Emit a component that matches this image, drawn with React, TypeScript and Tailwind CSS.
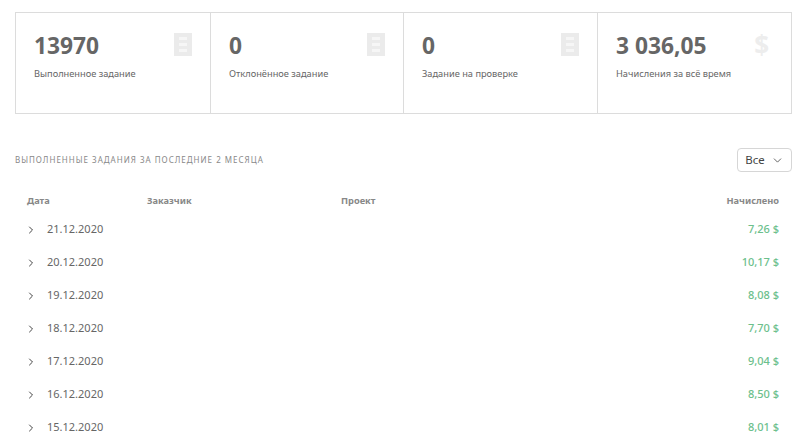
import { ChevronDown, ChevronRight } from "lucide-react";

const stats = [
  { value: "13970", label: "Выполненное задание", icon: "doc", cell: "w-[195px]" },
  { value: "0", label: "Отклонённое задание", icon: "doc", cell: "w-[193px]" },
  { value: "0", label: "Задание на проверке", icon: "doc", cell: "w-[194px]" },
  { value: "3 036,05", label: "Начисления за всё время", icon: "dollar", cell: "flex-1" },
];

const rows = [
  { date: "21.12.2020", sum: "7,26 $" },
  { date: "20.12.2020", sum: "10,17 $" },
  { date: "19.12.2020", sum: "8,08 $" },
  { date: "18.12.2020", sum: "7,70 $" },
  { date: "17.12.2020", sum: "9,04 $" },
  { date: "16.12.2020", sum: "8,50 $" },
  { date: "15.12.2020", sum: "8,01 $" },
];

function DocIcon() {
  return (
    <svg width="18" height="23" viewBox="0 0 18 23" className="block">
      <rect width="18" height="23" fill="#ebebeb" />
      <rect x="5" y="4" width="8" height="3" fill="#f6f6f6" />
      <rect x="5" y="10" width="8" height="3" fill="#f6f6f6" />
      <rect x="5" y="16" width="8" height="3" fill="#f6f6f6" />
    </svg>
  );
}

export default function App() {
  return (
    <div className="h-[436px] overflow-hidden bg-white px-[15px] pt-3 font-['Noto_Sans','Open_Sans',sans-serif] text-[#666]">
      <div className="flex h-[102px] w-[777px] border border-[#dcdcdc]">
        {stats.map((s, i) => (
          <div
            key={i}
            className={`${s.cell} flex justify-between border-[#dcdcdc] pl-[18px] pr-[18px] pt-5 ${i < 3 ? "border-r" : ""}`}
          >
            <div>
              <div className="-mt-px text-[22.75px] leading-[28px] font-bold text-[#666]">{s.value}</div>
              <div className="mt-[7px] text-[9.25px] leading-[14px] text-[#666]">{s.label}</div>
            </div>
            {s.icon === "doc" ? (
              <DocIcon />
            ) : (
              <div className="pr-[4px] text-[26px] leading-[24px] font-bold text-[#ededed]">$</div>
            )}
          </div>
        ))}
      </div>

      <div className="mt-[34px] flex h-6 w-[777px] items-center justify-between">
        <div className="text-[8px] tracking-[0.125em] text-[#888] uppercase">
          Выполненные задания за последние 2 месяца
        </div>
        <div className="flex h-6 w-[55px] items-center justify-center gap-[6px] rounded-sm border border-[#d6d6d6] text-[11.5px] text-[#444]">
          Все
          <ChevronDown size={13} strokeWidth={1.5} className="text-[#444]" />
        </div>
      </div>

      <div className="mt-[17px] w-[777px] pl-3 pr-[13px]">
        <div className="flex h-[24px] items-center text-[9.25px] font-bold text-[#888]">
          <div className="w-[120px]">Дата</div>
          <div className="w-[194px]">Заказчик</div>
          <div className="flex-1">Проект</div>
          <div>Начислено</div>
        </div>
        {rows.map((r) => (
          <div key={r.date} className="flex h-[33px] items-center text-[11px]">
            <ChevronRight size={12} strokeWidth={2} className="-ml-[2px] text-[#444]" />
            <div className="ml-[10px] flex-1 text-[#666]">{r.date}</div>
            <div className="font-medium text-[#6cc08c]">{r.sum}</div>
          </div>
        ))}
      </div>
    </div>
  );
}
